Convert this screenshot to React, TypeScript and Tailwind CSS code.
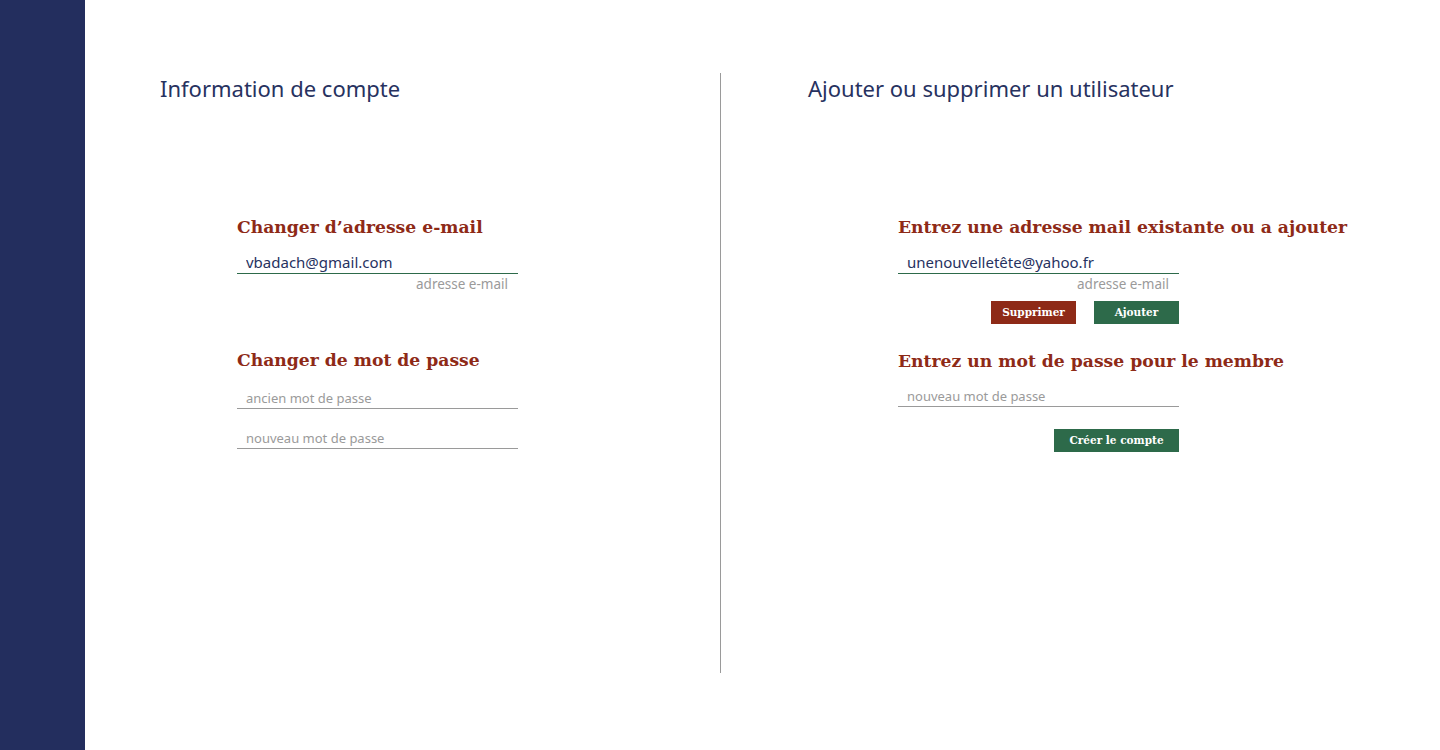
import { useState } from "react";

const sans = "font-['Noto_Sans',sans-serif]";
const serif = "font-['DejaVu_Serif',serif]";

function Field({
  value,
  placeholder,
  active,
  onChange,
}: {
  value: string;
  placeholder: string;
  active?: boolean;
  onChange: (v: string) => void;
}) {
  return (
    <input
      value={value}
      placeholder={placeholder}
      onChange={(e) => onChange(e.target.value)}
      className={`${sans} block h-[24px] w-full border-b bg-transparent pl-[9px] text-[15px] text-[#27325f] outline-none placeholder:text-[13px] placeholder:text-[#9a9a9a] ${
        active ? "border-[#2d6a4a]" : "border-[#9a9a9a]"
      }`}
    />
  );
}

export default function App() {
  const [email, setEmail] = useState("vbadach@gmail.com");
  const [oldPass, setOldPass] = useState("");
  const [newPass, setNewPass] = useState("");
  const [member, setMember] = useState("unenouvelletête@yahoo.fr");
  const [memberPass, setMemberPass] = useState("");

  return (
    <div className="flex h-[750px] w-full bg-white">
      <aside className="w-[85px] shrink-0 bg-[#232e5e]" />

      <main className="flex flex-1">
        {/* compte */}
        <section className="w-[635px] shrink-0 pl-[75px] pt-[73px]">
          <h1 className={`${sans} text-[22px] leading-[30px] text-[#27325f]`}>
            Information de compte
          </h1>

          <div className="ml-[77px] mt-[110px] w-[281px]">
            <h2 className={`${serif} whitespace-nowrap text-[17.2px] font-bold leading-[28px] text-[#8e2a17]`}>
              Changer d’adresse e-mail
            </h2>
            <div className="mt-[9px]">
              <Field value={email} placeholder="adresse e-mail" active onChange={setEmail} />
            </div>
            <p className={`${sans} mt-[2px] pr-[10px] text-right text-[13.5px] leading-[16px] text-[#9a9a9a]`}>
              adresse e-mail
            </p>

            <h2 className={`${serif} mt-[54px] whitespace-nowrap text-[17.2px] font-bold leading-[28px] text-[#8e2a17]`}>
              Changer de mot de passe
            </h2>
            <div className="mt-[11px]">
              <Field value={oldPass} placeholder="ancien mot de passe" onChange={setOldPass} />
            </div>
            <div className="mt-[16px]">
              <Field value={newPass} placeholder="nouveau mot de passe" onChange={setNewPass} />
            </div>
          </div>
        </section>

        <div className="mt-[73px] h-[600px] w-px shrink-0 bg-[#9a9a9a]" />

        {/* utilisateurs */}
        <section className="flex-1 pl-[87px] pt-[73px]">
          <h1 className={`${sans} text-[22px] leading-[30px] text-[#27325f]`}>
            Ajouter ou supprimer un utilisateur
          </h1>

          <div className="ml-[90px] mt-[110px] w-[281px]">
            <h2 className={`${serif} whitespace-nowrap text-[17.2px] font-bold leading-[28px] text-[#8e2a17]`}>
              Entrez une adresse mail existante ou a ajouter
            </h2>
            <div className="mt-[9px]">
              <Field value={member} placeholder="adresse e-mail" active onChange={setMember} />
            </div>
            <p className={`${sans} mt-[2px] pr-[10px] text-right text-[13.5px] leading-[16px] text-[#9a9a9a]`}>
              adresse e-mail
            </p>
            <div className="mt-[9px] flex justify-end gap-[18px]">
              <button className={`${serif} h-[23px] w-[85px] bg-[#8e2a17] text-[10.5px] font-bold text-white`}>
                Supprimer
              </button>
              <button className={`${serif} h-[23px] w-[85px] bg-[#2d6a4a] text-[10.5px] font-bold text-white`}>
                Ajouter
              </button>
            </div>

            <h2 className={`${serif} mt-[23px] whitespace-nowrap text-[17.2px] font-bold leading-[28px] text-[#8e2a17]`}>
              Entrez un mot de passe pour le membre
            </h2>
            <div className="mt-[8px]">
              <Field value={memberPass} placeholder="nouveau mot de passe" onChange={setMemberPass} />
            </div>
            <div className="mt-[22px] flex justify-end">
              <button className={`${serif} h-[23px] w-[125px] bg-[#2d6a4a] text-[10.5px] font-bold text-white`}>
                Créer le compte
              </button>
            </div>
          </div>
        </section>
      </main>
    </div>
  );
}
